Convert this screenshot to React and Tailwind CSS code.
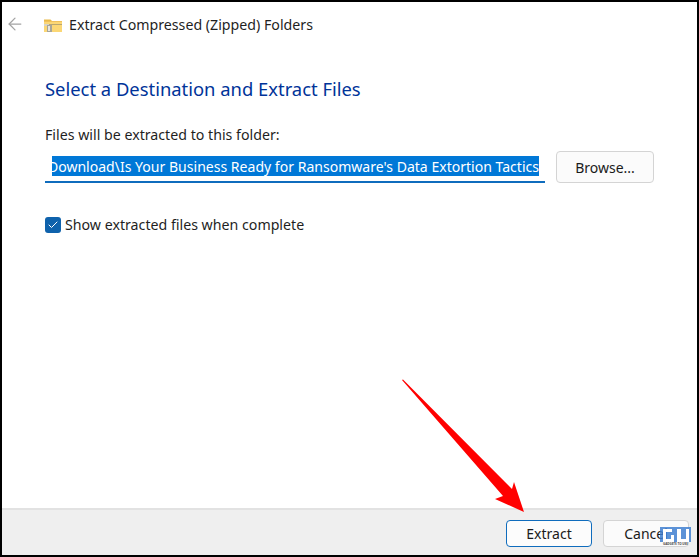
import { ArrowLeft, Check } from 'lucide-react';

const font = { fontFamily: '"Noto Sans", sans-serif' };

function ZipFolder() {
  return (
    <svg width="18" height="15" viewBox="0 0 18 15">
      <path d="M0 1.5h6.5l2 2H18V4H0z" fill="#e9b949" />
      <rect x="0" y="3" width="18" height="11" fill="#fbd775" />
      <rect x="0" y="3" width="18" height="1" fill="#f0c05a" />
      <rect x="5" y="6" width="13" height="1" fill="#b9a670" />
      <rect x="0" y="6" width="5" height="2" fill="#d9d4c4" />
      <rect x="3" y="7" width="5" height="7" fill="#a8a598" />
      <rect x="4" y="8" width="2" height="5" fill="#e8e6de" />
    </svg>
  );
}

function RedArrow() {
  return (
    <svg className="absolute left-[400px] top-[378px]" width="130" height="136" viewBox="0 0 130 136">
      <path d="M2 2 L3 1.5 L112 111 L114 104 L124 134 L95 121 L103 118 Z" fill="#ff0000" />
    </svg>
  );
}

function Watermark() {
  return (
    <div className="absolute left-[660px] top-[527px] flex h-[21px] w-[31px] flex-col items-center">
      <svg width="31" height="15" viewBox="0 0 31 15">
        <rect x="0" y="0" width="31" height="15" fill="#3f7fd0" fillOpacity="0.85" />
        <path d="M3 2h9v3H6v7h5V8h3v7H3z" fill="#ffffff" />
        <path d="M17 2h4v10h5V2h3v13H17z" fill="#ffffff" />
      </svg>
      <span className="text-[3px] leading-[5px] font-bold whitespace-nowrap text-[#444444]">GADGETS TO USE</span>
    </div>
  );
}

function DialogButton({ children, primary }) {
  return (
    <div
      className={`flex h-[27px] w-[86px] items-center justify-center rounded-[4px] border text-[14px] text-[#1a1a1a] ${
        primary ? 'border-[#0f6cbd] bg-[#fcfcfc]' : 'border-[#d4d4d4] bg-[#fbfbfb]'
      }`}
    >
      {children}
    </div>
  );
}

export default function App() {
  return (
    <div className="relative h-[557px] w-[699px] overflow-hidden bg-black p-[2px]" style={font}>
      <div className="flex h-[553px] w-[695px] flex-col bg-white">
        <div className="flex h-[44px] items-center pt-[2px] text-[#1f1f1f]">
          <ArrowLeft size={20} strokeWidth={1.5} className="-mt-[2px] ml-[3px] text-[#a3a3a3]" />
          <div className="ml-[19px]">
            <ZipFolder />
          </div>
          <span className="ml-[7px] text-[14.2px]">Extract Compressed (Zipped) Folders</span>
        </div>

        <div className="flex-1 pl-[43px]">
          <h1 className="mt-[28px] text-[18.4px] leading-[30px] font-normal text-[#003399]">
            Select a Destination and Extract Files
          </h1>
          <p className="mt-[21px] text-[14.2px] leading-[20px] text-[#1f1f1f]">Files will be extracted to this folder:</p>

          <div className="mt-[6px] flex items-start">
            <div className="mt-[4px] h-[28px] w-[500px] border-b-2 border-[#0f6cbd] pt-[1px] pl-[7px]">
              <div className="flex h-[20px] w-[487px] justify-end overflow-hidden bg-[#0078d7]">
                <span className="shrink-0 text-[14.06px] leading-[21px] whitespace-nowrap text-white">
                  Download\Is Your Business Ready for Ransomware's Data Extortion Tactics
                </span>
              </div>
            </div>
            <div className="ml-[11px] flex h-[32px] w-[98px] items-center justify-center rounded-[4px] border border-[#d4d4d4] bg-[#fbfbfb] text-[14px] text-[#1a1a1a]">
              Browse...
            </div>
          </div>

          <div className="mt-[34px] flex items-center">
            <div className="flex h-[16px] w-[16px] items-center justify-center rounded-[3px] bg-[#0f62ac]">
              <Check size={12} strokeWidth={2} className="text-white" />
            </div>
            <span className="ml-[4px] text-[14.2px] leading-[16px] text-[#1f1f1f]">Show extracted files when complete</span>
          </div>
        </div>

        <div className="flex h-[47px] items-start justify-end gap-[11px] border-t-2 border-[#e2e2e2] bg-[#efefef] pt-[10px] pr-[8px]">
          <DialogButton primary>Extract</DialogButton>
          <DialogButton>Cancel</DialogButton>
        </div>
      </div>
      <RedArrow />
      <Watermark />
    </div>
  );
}
